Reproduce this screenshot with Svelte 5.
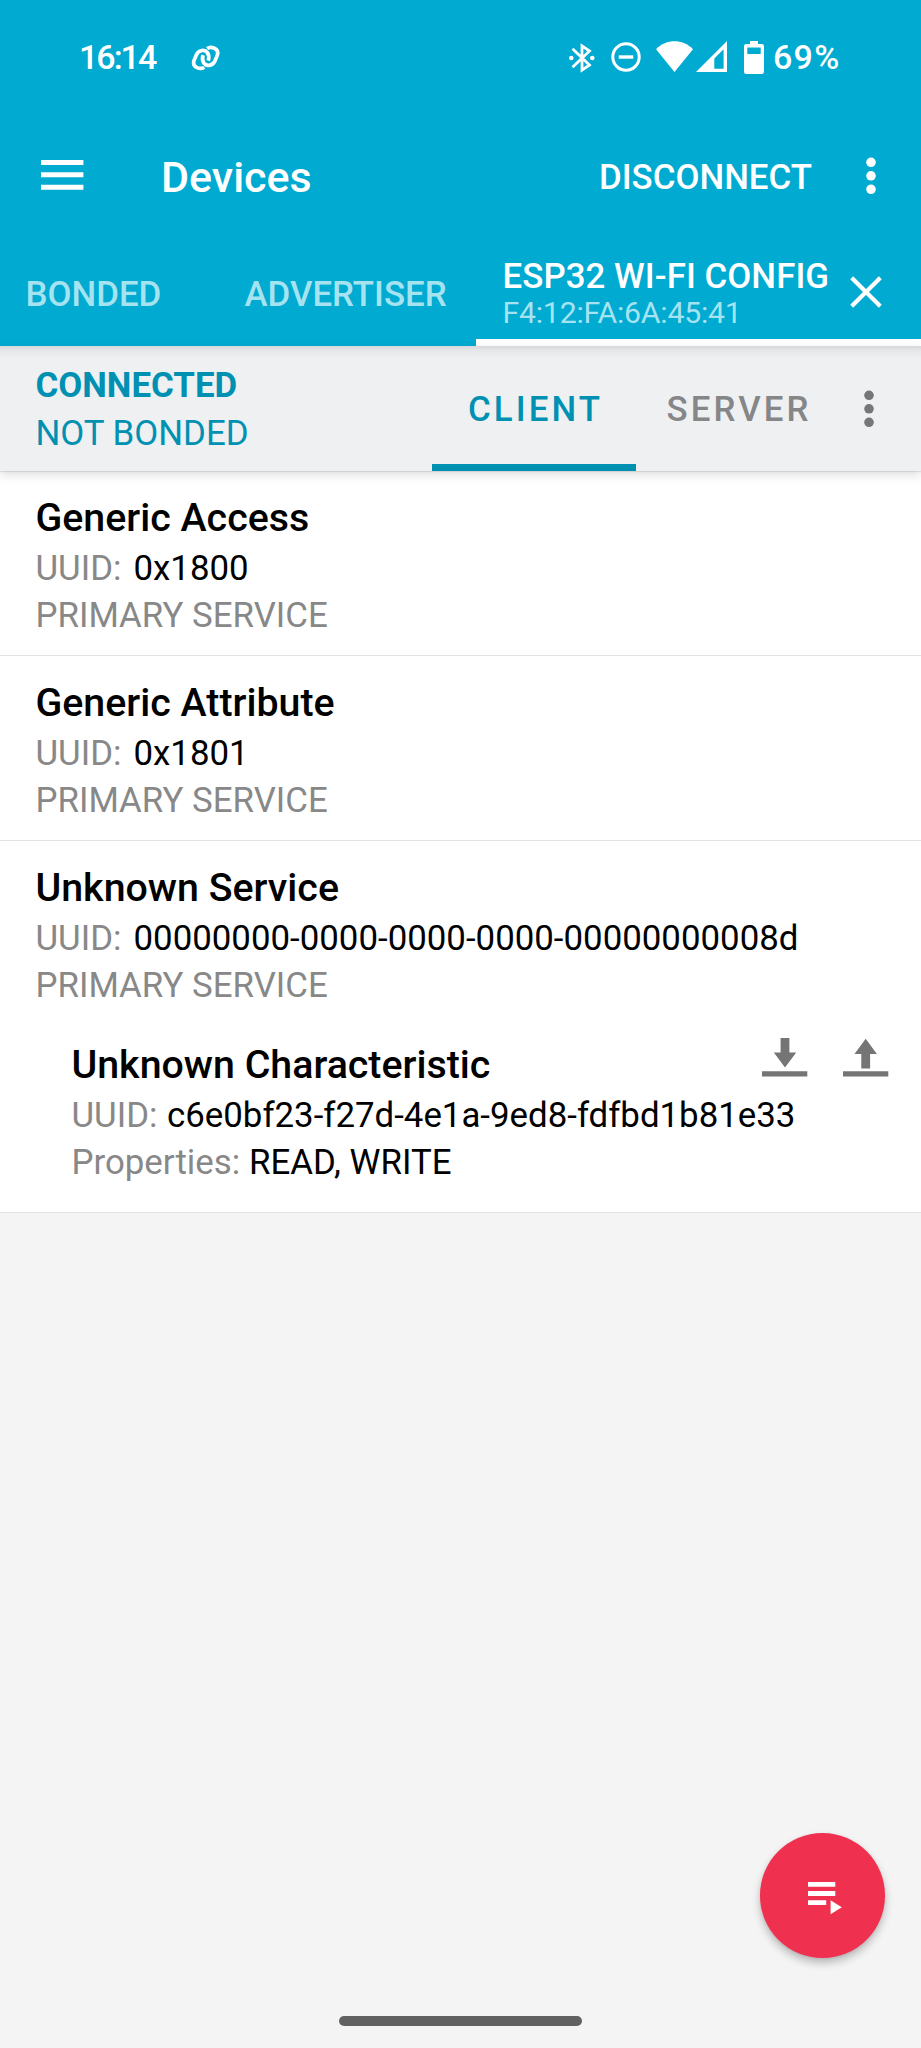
<script>
  const services = [
    { name: 'Generic Access', uuid: '0x1800', characteristics: [] },
    { name: 'Generic Attribute', uuid: '0x1801', characteristics: [] },
    {
      name: 'Unknown Service',
      uuid: '00000000-0000-0000-0000-00000000008d',
      characteristics: [
        {
          name: 'Unknown Characteristic',
          uuid: 'c6e0bf23-f27d-4e1a-9ed8-fdfbd1b81e33',
          properties: 'READ, WRITE'
        }
      ]
    }
  ];
</script>

<div class="screen">
  <header class="top">
    <div class="status">
      <span class="clock">16:14</span>
      <svg class="link" width="30" height="28" viewBox="0 0 30 28" fill="none" stroke="#fff" stroke-width="3.7">
        <path d="M13.2 23.2C9.5 25.8 1 23.8 2.9 16.8L5.4 10.8C7.6 5.8 13.8 5 16.4 8.6C18 11 18.2 13.8 17.2 16.6" />
        <path transform="rotate(180 14.65 13.9)" d="M13.2 23.2C9.5 25.8 1 23.8 2.9 16.8L5.4 10.8C7.6 5.8 13.8 5 16.4 8.6C18 11 18.2 13.8 17.2 16.6" />
      </svg>
      <div class="indicators">
        <svg class="bt" width="26" height="30" viewBox="0 0 26 30" fill="none" stroke="#fff" stroke-width="2.8">
          <path d="M3.5 5.8L20.5 22L13 27.2V2.8L20.5 8L3.5 24.2" />
          <circle cx="2.3" cy="15" r="2.3" fill="#fff" stroke="none" />
          <circle cx="23.3" cy="15" r="2.3" fill="#fff" stroke="none" />
        </svg>
        <svg class="dnd" width="30" height="30" viewBox="0 0 30 30" fill="none" stroke="#fff">
          <circle cx="15" cy="15" r="13.2" stroke-width="3" />
          <path d="M7.7 15H22.3" stroke-width="3.4" />
        </svg>
        <svg class="wifi" width="37" height="31" viewBox="0 0 37 31" fill="#fff">
          <path d="M0 8.2C10.5-2.4 26.5-2.4 37 8.2L18.5 31Z" />
        </svg>
        <svg class="signal" width="31" height="31" viewBox="0 0 31 31">
          <path fill="#fff" fill-rule="evenodd" d="M0 31L31 0V31ZM18.3 27.8H27.6V8.3L18.3 17.6Z" />
        </svg>
        <svg class="battery" width="20" height="33" viewBox="0 0 20 33">
          <path fill="#fff" fill-rule="evenodd" d="M6 0H14V3H17.8Q20 3 20 5.2V30.8Q20 33 17.8 33H2.2Q0 33 0 30.8V5.2Q0 3 2.2 3H6ZM3.3 6.4V13H16.7V6.4Z" />
        </svg>
        <span class="percent">69%</span>
      </div>
    </div>

    <div class="appbar">
      <svg class="menu" width="43" height="30" viewBox="0 0 43 30" fill="#fff">
        <path d="M0 0H42.4V5H0ZM0 12.3H42.4V17.3H0ZM0 24.7H42.4V29.7H0Z" />
      </svg>
      <h1>Devices</h1>
      <span class="disconnect">DISCONNECT</span>
      <svg class="more" width="10" height="38" viewBox="0 0 10 38" fill="#fff">
        <circle cx="5" cy="5.3" r="4.8" /><circle cx="5" cy="18.8" r="4.8" /><circle cx="5" cy="32.3" r="4.8" />
      </svg>
    </div>

    <nav class="tabs">
      <span class="tab bonded">BONDED</span>
      <span class="tab advertiser">ADVERTISER</span>
      <div class="device">
        <div class="labels">
          <span class="name">ESP32 WI-FI CONFIG</span>
          <span class="mac">F4:12:FA:6A:45:41</span>
        </div>
        <svg class="close" width="32" height="32" viewBox="0 0 32 32" stroke="#fff" stroke-width="4.2">
          <path d="M1.7 1.7L30.3 30.3M30.3 1.7L1.7 30.3" />
        </svg>
      </div>
    </nav>
  </header>

  <section class="connection">
    <div class="state">
      <span class="connected">CONNECTED</span>
      <span class="bond">NOT BONDED</span>
    </div>
    <span class="role active">CLIENT</span>
    <span class="role server">SERVER</span>
    <svg class="more grey" width="10" height="38" viewBox="0 0 10 38" fill="#757677">
      <circle cx="5" cy="5.3" r="4.8" /><circle cx="5" cy="18.8" r="4.8" /><circle cx="5" cy="32.3" r="4.8" />
    </svg>
  </section>

  <main>
    {#each services as s}
      <article>
        <h2>{s.name}</h2>
        <p class="uuid"><span>UUID:</span><b>{s.uuid}</b></p>
        <p class="kind"><span>PRIMARY SERVICE</span></p>
        {#each s.characteristics as c}
          <div class="characteristic">
            <div class="head">
              <h2>{c.name}</h2>
              <svg class="read" width="46" height="39" viewBox="0 0 46 39" fill="#757575">
                <path d="M18.6 0H27.4V14.6H34.2L23 29.5L11.8 14.6H18.6ZM0 33.2H45.3V38.6H0Z" />
              </svg>
              <svg class="write" width="46" height="39" viewBox="0 0 46 39" fill="#757575">
                <path d="M22.7 .8L33.9 15.9H27.1V30.4H18.3V15.9H11.5ZM0 33.2H45.3V38.6H0Z" />
              </svg>
            </div>
            <p class="uuid"><span>UUID:</span><b>{c.uuid}</b></p>
            <p class="props"><span>Properties:</span><b>{c.properties}</b></p>
          </div>
        {/each}
      </article>
    {/each}
  </main>

  <div class="fab">
    <svg width="34" height="33" viewBox="0 0 34 33" fill="#fff">
      <path d="M0 0H27.3V4.8H0ZM0 9.1H27.3V13.9H0ZM0 18.2H18.2V23H0ZM22.6 18.2L33.8 25.2L22.6 32.2Z" />
    </svg>
  </div>
  <div class="home"></div>
</div>

<style>
  :global(body) { margin: 0; background: #f4f4f4; }
  .screen {
    position: relative;
    width: 921px;
    height: 2048px;
    overflow: hidden;
    background: #f4f4f4;
    color: #000;
    font-family: Roboto, sans-serif;
    font-size: 34.85px;
    white-space: nowrap;
  }
  h1, h2, p { margin: 0; }
  svg { display: block; flex: none; }

  .top { height: 346px; background: #00aad1; color: #fff; }
  .status { display: flex; height: 116px; font-weight: 500; font-size: 34px; }
  .clock { margin: 37px 0 0 79px; width: 77px; line-height: 40px; letter-spacing: -2px; }
  .link { margin: 44px 0 0 35px; overflow: visible; }
  .indicators { display: flex; margin-left: auto; margin-right: 80px; }
  .bt { margin: 43px 16px 0 0; }
  .dnd { margin: 42px 15px 0 0; }
  .wifi { margin: 41px 3px 0 0; }
  .signal { margin: 41px 17px 0 0; }
  .battery { margin: 41px 9px 0 0; }
  .percent { margin-top: 37px; width: 68px; line-height: 40px; letter-spacing: 1.3px; }

  .appbar { display: flex; height: 118px; }
  .menu { margin: 44px 0 0 41px; }
  h1 { margin: 37px 0 0 77px; font-size: 43px; font-weight: 500; line-height: 48px; }
  .disconnect { margin: 42px 54px 0 auto; font-weight: 500; line-height: 40px; }
  .more { margin: 41px 45px 0 0; }

  .tabs { display: flex; height: 112px; }
  .tab { color: #a6e3f1; font-weight: 500; line-height: 40px; margin-top: 40.6px; }
  .bonded { margin-left: 25.5px; width: 219px; }
  .advertiser { width: 231.5px; }
  .device { display: flex; flex: 1; box-sizing: border-box; border-bottom: 7px solid #fff; }
  .labels { display: flex; flex-direction: column; margin: 23.4px 0 0 26.5px; width: 347.5px; }
  .name { font-weight: 500; line-height: 40px; letter-spacing: .06px; }
  .mac { color: #a6e3f1; font-size: 30.2px; letter-spacing: -.2px; line-height: 32px; }
  .close { margin: 42px 0 0 0; }

  .connection {
    position: relative;
    display: flex;
    box-sizing: border-box;
    height: 125px;
    background: linear-gradient(#d6d8da, #e5e7e9 5px, #eef0f2 13px);
    box-shadow: 0 1px 1px rgba(0, 0, 0, .09), 0 4px 10px rgba(0, 0, 0, .13);
  }
  .state { display: flex; flex-direction: column; margin: 16px 0 0 35.5px; width: 396.5px; color: #0091b2; line-height: 48px; }
  .connected { font-weight: 700; }
  .role { font-weight: 500; letter-spacing: 3.1px; line-height: 127px; height: 125px; color: #858687; }
  .active { box-sizing: border-box; width: 204px; padding-left: 36px; color: #0091b2; box-shadow: inset 0 -7px #0091b2; }
  .server { width: 228px; padding-left: 30.5px; box-sizing: border-box; }
  .grey { margin: 44px 0 0 0; }

  article { box-sizing: border-box; background: #fff; border-bottom: 1px solid #e2e2e2; padding: 22px 0 15px 35.5px; }
  h2 { font-size: 39.35px; font-weight: 500; line-height: 51px; }
  p { display: flex; height: 48px; line-height: 48px; }
  p span { color: #888; }
  p b { font-weight: 400; }
  .uuid { line-height: 49px; }
  .uuid span { width: 98px; }
  .characteristic { margin: 30px 0 10px 36px; }
  .head { display: flex; height: 51px; }
  .head h2 { width: 690.5px; }
  .read { margin: -2px 35px 0 0; }
  .write { margin-top: -2px; }
  .characteristic .uuid span { width: 95.5px; }
  .props span { width: 177.5px; }

  .fab {
    position: absolute;
    left: 760px;
    top: 1833px;
    width: 125px;
    height: 125px;
    border-radius: 50%;
    background: #f0304f;
    box-shadow: 0 5px 9px rgba(0, 0, 0, .24), 0 1px 3px rgba(0, 0, 0, .08);
  }
  .fab svg { margin: 49px 0 0 47.5px; }
  .home { position: absolute; left: 339px; top: 2016px; width: 243px; height: 10px; border-radius: 5px; background: #616161; }
</style>
